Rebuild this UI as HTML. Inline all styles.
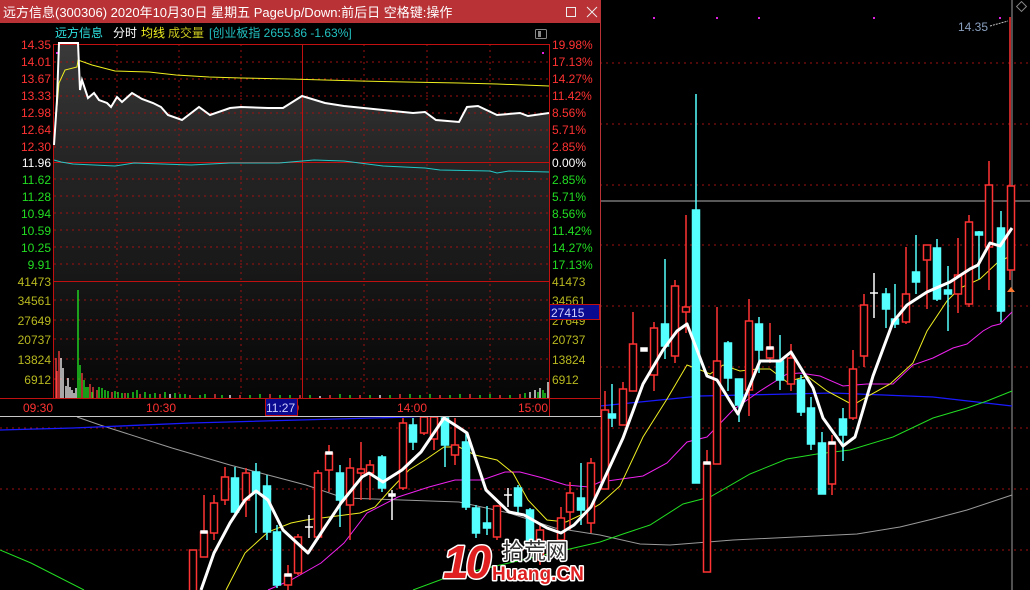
<!DOCTYPE html>
<html><head><meta charset="utf-8"><style>
html,body{margin:0;padding:0;background:#000;width:1030px;height:590px;overflow:hidden}
svg{display:block;font-family:"Liberation Sans","Noto Sans CJK SC",sans-serif}
</style></head><body>
<svg width="1030" height="590" viewBox="0 0 1030 590" xmlns="http://www.w3.org/2000/svg">
<rect width="1030" height="590" fill="#000"/>
<!-- main grid -->
<g stroke="#a01010" stroke-width="1" stroke-dasharray="2,4">
<line x1="0" y1="63" x2="1030" y2="63"/><line x1="0" y1="124" x2="1030" y2="124"/>
<line x1="0" y1="185" x2="1030" y2="185"/><line x1="0" y1="245" x2="1030" y2="245"/>
<line x1="0" y1="306" x2="1030" y2="306"/><line x1="0" y1="367" x2="1030" y2="367"/>
<line x1="0" y1="428" x2="1030" y2="428"/><line x1="0" y1="489" x2="1030" y2="489"/>
<line x1="0" y1="550" x2="1030" y2="550"/>
</g>
<line x1="600" y1="201" x2="1030" y2="201" stroke="#b0b0b0"/>
<line x1="1012" y1="0" x2="1012" y2="590" stroke="#a0a0a0"/>
<g fill="#e020e0"><rect x="653" y="17" width="2" height="2"/><rect x="716" y="17" width="2" height="2"/><rect x="758" y="17" width="2" height="2"/><rect x="873" y="17" width="2" height="2"/><rect x="999" y="17" width="2" height="2"/></g>
<text x="958" y="31" fill="#8aa0c0" font-size="12">14.35</text>
<line x1="990" y1="26" x2="1008" y2="21" stroke="#c0c0c0" stroke-dasharray="2,1"/>
<rect x="1018" y="3" width="7" height="7" fill="none" stroke="#888" transform="rotate(45 1021.5 6.5)"/>
<!-- MA lines -->
<g fill="none" stroke-width="1">
<polyline stroke="#9a9a9a" points="77,417 100,425 172,448 230,465 268,475 306,485 344,498 402,500 459,502 509,513 555,528 600,535 640,544 670,545 733,540 857,534 900,527 933,519 967,510 1012,495"/>
<polyline stroke="#1a1aff" stroke-width="1.3" points="0,430 73,428 191,423 410,417 600,406 700,396 833,393 933,397 1012,406"/>
<polyline stroke="#22dd22" points="0,550 31,563 84,590"/>
<polyline stroke="#22dd22" points="413,590 448,577 509,563 600,542 623,534 650,525 683,504 710,497 750,474 787,459 817,454 850,450 893,437 933,418 967,408 987,401 1012,391"/>
<polyline stroke="#ee22ee" points="268,590 291,580 321,563 344,543 367,513 398,497 429,487 455,480 482,480 505,472 520,472 543,478 566,485 589,487 600,482 643,476 667,463 687,442 707,437 733,410 760,391 787,374 800,373 820,376 843,386 867,384 893,384 913,365 933,358 953,348 967,344 983,331 992,326 1000,324 1012,312"/>
<polyline stroke="#eeee22" points="226,590 245,553 268,532 291,523 306,520 329,517 360,513 375,507 390,490 409,470 425,460 444,447 459,447 475,455 497,460 513,473 528,500 547,520 566,522 585,513 600,504 620,486 643,437 667,399 687,365 703,371 710,374 723,365 740,371 757,369 770,369 787,382 807,376 827,391 853,405 870,395 890,384 913,363 927,331 947,301 960,288 980,279 997,263 1012,255"/>
</g>
<!-- candles -->
<g id="cd" stroke-width="1.5">
<g stroke="#ff3333" fill="#000">
<line x1="193" y1="550" x2="193" y2="590"/><rect x="189.5" y="550" width="7" height="45"/>
<line x1="204" y1="495" x2="204" y2="557"/><rect x="200.5" y="532" width="7" height="25"/>
<line x1="214" y1="495" x2="214" y2="540"/><rect x="210.5" y="503" width="7" height="30"/>
<line x1="225" y1="467" x2="225" y2="505"/><rect x="221.5" y="477" width="7" height="23"/>
<line x1="246" y1="468" x2="246" y2="517"/><rect x="242.5" y="473" width="7" height="27"/>
<line x1="288" y1="565" x2="288" y2="590"/><rect x="284.5" y="575" width="7" height="10"/>
<line x1="298" y1="534" x2="298" y2="575"/><rect x="294.5" y="537" width="7" height="36"/>
<line x1="318" y1="470" x2="318" y2="540"/><rect x="314.5" y="473" width="7" height="64"/>
<line x1="329" y1="445" x2="329" y2="492"/><rect x="325.5" y="453" width="7" height="17"/>
<line x1="350" y1="458" x2="350" y2="540"/><rect x="346.5" y="468" width="7" height="37"/>
<line x1="361" y1="442" x2="361" y2="500"/><rect x="357.5" y="469" width="7" height="4"/>
<line x1="370" y1="460" x2="370" y2="500"/><rect x="366.5" y="465" width="7" height="8"/>
<line x1="403" y1="418" x2="403" y2="490"/><rect x="399.5" y="423" width="7" height="65"/>
<line x1="424" y1="416" x2="424" y2="435"/><rect x="420.5" y="417" width="7" height="16"/>
<line x1="434" y1="416" x2="434" y2="450"/><rect x="430.5" y="417" width="7" height="22"/>
<line x1="455" y1="418" x2="455" y2="465"/><rect x="451.5" y="445" width="7" height="10"/>
<line x1="497" y1="505" x2="497" y2="540"/><rect x="493.5" y="506" width="7" height="31"/>
<line x1="540" y1="525" x2="540" y2="565"/><rect x="536.5" y="530" width="7" height="30"/>
<line x1="561" y1="507" x2="561" y2="545"/><rect x="557.5" y="518" width="7" height="22"/>
<line x1="570" y1="482" x2="570" y2="530"/><rect x="566.5" y="493" width="7" height="19"/>
<line x1="591" y1="458" x2="591" y2="533"/><rect x="587.5" y="463" width="7" height="60"/>
<line x1="605" y1="391" x2="605" y2="489"/><rect x="601.5" y="410" width="7" height="79"/>
<line x1="623" y1="382" x2="623" y2="425"/><rect x="619.5" y="389" width="7" height="36"/>
<line x1="633" y1="312" x2="633" y2="391"/><rect x="629.5" y="344" width="7" height="47"/>
<line x1="654" y1="322" x2="654" y2="391"/><rect x="650.5" y="328" width="7" height="47"/>
<line x1="675" y1="280" x2="675" y2="363"/><rect x="671.5" y="286" width="7" height="70"/>
<line x1="686" y1="215" x2="686" y2="333"/><rect x="682.5" y="307" width="7" height="5"/>
<line x1="707" y1="450" x2="707" y2="572"/><rect x="703.5" y="463" width="7" height="109"/>
<line x1="717" y1="307" x2="717" y2="464"/><rect x="713.5" y="361" width="7" height="103"/>
<line x1="749" y1="299" x2="749" y2="416"/><rect x="745.5" y="321" width="7" height="69"/>
<line x1="770" y1="323" x2="770" y2="363"/><rect x="766.5" y="348" width="7" height="10"/>
<line x1="791" y1="344" x2="791" y2="391"/><rect x="787.5" y="358" width="7" height="26"/>
<line x1="832" y1="435" x2="832" y2="495"/><rect x="828.5" y="443" width="7" height="41"/>
<line x1="853" y1="350" x2="853" y2="420"/><rect x="849.5" y="369" width="7" height="49"/>
<line x1="864" y1="294" x2="864" y2="367"/><rect x="860.5" y="305" width="7" height="51"/>
<line x1="906" y1="247" x2="906" y2="324"/><rect x="902.5" y="294" width="7" height="28"/>
<line x1="927" y1="245" x2="927" y2="309"/><rect x="923.5" y="245" width="7" height="15"/>
<line x1="958" y1="238" x2="958" y2="313"/><rect x="954.5" y="275" width="7" height="19"/>
<line x1="969" y1="215" x2="969" y2="307"/><rect x="965.5" y="222" width="7" height="82"/>
<line x1="989" y1="161" x2="989" y2="290"/><rect x="985.5" y="185" width="7" height="62"/>
<line x1="1010" y1="17" x2="1010" y2="280"/><rect x="1007.5" y="186" width="7" height="84"/>
</g>
<g stroke="#55ffff" fill="#55ffff">
<line x1="235" y1="467" x2="235" y2="515"/><rect x="231.5" y="478" width="7" height="34"/>
<line x1="256" y1="463" x2="256" y2="533"/><rect x="252.5" y="472" width="7" height="20"/>
<line x1="267" y1="475" x2="267" y2="540"/><rect x="263.5" y="486" width="7" height="46"/>
<line x1="277" y1="525" x2="277" y2="588"/><rect x="273.5" y="532" width="7" height="53"/>
<line x1="340" y1="465" x2="340" y2="527"/><rect x="336.5" y="473" width="7" height="27"/>
<line x1="382" y1="455" x2="382" y2="492"/><rect x="378.5" y="457" width="7" height="31"/>
<line x1="413" y1="418" x2="413" y2="450"/><rect x="409.5" y="425" width="7" height="17"/>
<line x1="445" y1="416" x2="445" y2="467"/><rect x="441.5" y="418" width="7" height="27"/>
<line x1="466" y1="433" x2="466" y2="510"/><rect x="462.5" y="442" width="7" height="65"/>
<line x1="476" y1="505" x2="476" y2="538"/><rect x="472.5" y="508" width="7" height="25"/>
<line x1="487" y1="506" x2="487" y2="535"/><rect x="483.5" y="523" width="7" height="5"/>
<line x1="518" y1="485" x2="518" y2="515"/><rect x="514.5" y="488" width="7" height="18"/>
<line x1="530" y1="508" x2="530" y2="560"/><rect x="526.5" y="510" width="7" height="33"/>
<line x1="581" y1="463" x2="581" y2="525"/><rect x="577.5" y="498" width="7" height="12"/>
<line x1="612" y1="384" x2="612" y2="427"/><rect x="608.5" y="414" width="7" height="4"/>
<line x1="665" y1="259" x2="665" y2="359"/><rect x="661.5" y="324" width="7" height="22"/>
<line x1="696" y1="94" x2="696" y2="483"/><rect x="692.5" y="210" width="7" height="273"/>
<line x1="728" y1="341" x2="728" y2="391"/><rect x="724.5" y="343" width="7" height="35"/>
<line x1="739" y1="379" x2="739" y2="422"/><rect x="735.5" y="379" width="7" height="26"/>
<line x1="759" y1="317" x2="759" y2="373"/><rect x="755.5" y="324" width="7" height="26"/>
<line x1="780" y1="335" x2="780" y2="390"/><rect x="776.5" y="361" width="7" height="19"/>
<line x1="801" y1="375" x2="801" y2="416"/><rect x="797.5" y="380" width="7" height="32"/>
<line x1="811" y1="397" x2="811" y2="450"/><rect x="807.5" y="408" width="7" height="36"/>
<line x1="822" y1="432" x2="822" y2="494"/><rect x="818.5" y="443" width="7" height="51"/>
<line x1="843" y1="408" x2="843" y2="461"/><rect x="839.5" y="419" width="7" height="16"/>
<line x1="886" y1="288" x2="886" y2="328"/><rect x="882.5" y="294" width="7" height="15"/>
<line x1="895" y1="284" x2="895" y2="328"/><rect x="891.5" y="319" width="7" height="5"/>
<line x1="916" y1="235" x2="916" y2="294"/><rect x="912.5" y="272" width="7" height="10"/>
<line x1="937" y1="239" x2="937" y2="301"/><rect x="933.5" y="248" width="7" height="51"/>
<line x1="948" y1="266" x2="948" y2="331"/><rect x="944.5" y="290" width="7" height="4"/>
<line x1="979" y1="231" x2="979" y2="279"/><rect x="975.5" y="232" width="7" height="3"/>
<line x1="1001" y1="211" x2="1001" y2="322"/><rect x="997.5" y="228" width="7" height="83"/>
</g>
<g stroke="#fff" fill="#fff">
<line x1="309" y1="515" x2="309" y2="538"/><line x1="305" y1="527" x2="313" y2="527"/>
<line x1="392" y1="490" x2="392" y2="520"/><rect x="389" y="494" width="6" height="2"/>
<line x1="508" y1="488" x2="508" y2="507"/><line x1="504" y1="495" x2="512" y2="495"/>
<line x1="874" y1="273" x2="874" y2="318"/><line x1="870" y1="293" x2="878" y2="293"/>
<rect x="201" y="531" width="6" height="2"/><rect x="285" y="574" width="6" height="2"/><rect x="326" y="452" width="6" height="2"/>
<rect x="641" y="348" width="6" height="3"/><rect x="704" y="462" width="6" height="2"/><rect x="767" y="347" width="6" height="2"/><rect x="829" y="442" width="6" height="2"/>
</g>
</g>
<path d="M1007,292 L1011,287 L1015,292 Z" fill="#ff7a30"/>
<polyline fill="none" stroke="#fff" stroke-width="3" stroke-linejoin="round" points="201,590 214,553 230,523 245,500 256,491 268,500 283,530 308,553 325,527 341,503 362,477 369,473 383,482 402,470 421,452 444,418 455,425 467,433 486,490 509,512 524,515 547,528 561,533 574,525 591,507 600,488 623,438 643,384 663,350 677,331 687,324 707,376 717,380 738,414 760,361 780,361 791,352 813,388 823,418 843,446 855,437 873,376 893,322 907,305 927,292 950,282 970,269 978,265 990,243 1000,246 1012,228"/>
<!-- logo -->
<g font-weight="bold" stroke="#fff" stroke-width="3" paint-order="stroke" stroke-linejoin="round">
<text x="443" y="578" font-size="46" fill="#e02020" font-style="italic" letter-spacing="-3">10</text>
<text x="502" y="559" font-size="22" fill="#333" font-weight="normal">拾荒网</text>
<text x="492" y="580" font-size="19" fill="#e02020">Huang.CN</text>
</g>

<!-- popup -->
<rect x="0" y="0" width="601" height="417" fill="#000"/>
<rect x="0" y="0" width="601" height="23" fill="#b83236"/>
<text x="3" y="17" fill="#fff" font-size="13">远方信息(300306) 2020年10月30日 星期五 PageUp/Down:前后日 空格键:操作</text>
<rect x="566.5" y="7.5" width="9" height="9" fill="none" stroke="#eee"/>
<path d="M587,7 L597,17 M597,7 L587,17" stroke="#eee" stroke-width="1"/>
<line x1="600.5" y1="23" x2="600.5" y2="417" stroke="#b83236"/>
<text x="55" y="37" fill="#2ee0e0" font-size="12">远方信息</text>
<text x="113" y="37" fill="#fff" font-size="12">分时</text>
<text x="141" y="37" fill="#f0f020" font-size="12">均线</text>
<text x="168" y="37" fill="#c8c820" font-size="12">成交量</text>
<text x="209" y="37" fill="#22c0c0" font-size="12">[创业板指 2655.86 -1.63%]</text>
<rect x="535.5" y="29.5" width="11" height="9" rx="1" fill="none" stroke="#888"/><rect x="538" y="31" width="3" height="6" fill="#888"/>
<defs><linearGradient id="g" x1="0" y1="0" x2="0" y2="1"><stop offset="0" stop-color="#3a3a3a"/><stop offset="0.3" stop-color="#262626"/><stop offset="0.6" stop-color="#1a1a1a"/><stop offset="1" stop-color="#060606"/></linearGradient></defs>
<path fill="url(#g)" d="M54,398 L54,145 L57,100 L59,43 L78,43 L80,90 L82,80 L88,98 L94,93 L99,100 L107,103 L111,107 L117,97 L122,102 L132,93 L142,99 L153,103 L161,107 L168,115 L182,120 L199,107 L210,115 L230,108 L241,107 L268,108 L283,108 L302,96 L325,103 L344,106 L383,110 L413,113 L425,112 L436,120 L459,122 L467,107 L478,106 L497,115 L520,113 L528,116 L549,113 L549,398 Z"/>
<g stroke="#a01010" stroke-dasharray="2,4">
<line x1="54" y1="62" x2="549" y2="62"/><line x1="54" y1="79" x2="549" y2="79"/><line x1="54" y1="96" x2="549" y2="96"/><line x1="54" y1="113" x2="549" y2="113"/><line x1="54" y1="130" x2="549" y2="130"/><line x1="54" y1="147" x2="549" y2="147"/>
<line x1="54" y1="179" x2="549" y2="179"/><line x1="54" y1="196" x2="549" y2="196"/><line x1="54" y1="213" x2="549" y2="213"/><line x1="54" y1="230" x2="549" y2="230"/><line x1="54" y1="247" x2="549" y2="247"/><line x1="54" y1="264" x2="549" y2="264"/>
<line x1="54" y1="300" x2="549" y2="300"/><line x1="54" y1="320" x2="549" y2="320"/><line x1="54" y1="339" x2="549" y2="339"/><line x1="54" y1="359" x2="549" y2="359"/><line x1="54" y1="379" x2="549" y2="379"/>
<line x1="117" y1="44" x2="117" y2="398"/><line x1="179" y1="44" x2="179" y2="398"/><line x1="241" y1="44" x2="241" y2="398"/><line x1="364" y1="44" x2="364" y2="398"/><line x1="427" y1="44" x2="427" y2="398"/><line x1="490" y1="44" x2="490" y2="398"/>
</g>
<g stroke="#c01010">
<line x1="53" y1="44.5" x2="549" y2="44.5"/><line x1="53" y1="162.5" x2="549" y2="162.5"/><line x1="53" y1="281.5" x2="549" y2="281.5"/>
<line x1="53.5" y1="44" x2="53.5" y2="398"/><line x1="549.5" y1="44" x2="549.5" y2="416"/><line x1="302.5" y1="44" x2="302.5" y2="398"/>
<line x1="0" y1="398.5" x2="600" y2="398.5"/>
</g>
<rect x="56" y="52" width="2" height="2" fill="#e020e0"/><rect x="542" y="52" width="2" height="2" fill="#e020e0"/>
<polyline fill="none" stroke="#22c8c8" points="54,160 61,162 73,164 115,166 134,163 191,165 230,163 279,163 314,160 344,161 383,166 425,168 440,170 490,171 497,173 509,171 549,172"/>
<polyline fill="none" stroke="#f0f020" points="55,130 59,83 65,70 77,67 78,60 92,65 115,71 149,72 176,75 209,77 241,78 289,79 360,81 406,82 459,83 497,84 549,86"/>
<polyline fill="none" stroke="#fff" stroke-width="2" points="54,145 57,100 59,43 78,43 80,90 82,80 88,98 94,93 99,100 107,103 111,107 117,97 122,102 132,93 142,99 153,103 161,107 168,115 182,120 199,107 210,115 230,108 241,107 268,108 283,108 302,96 325,103 344,106 383,110 413,113 425,112 436,120 459,122 467,107 478,106 497,115 520,113 528,116 549,113"/>
<!-- volume -->
<g stroke-width="1.3">
<path stroke="#ff4040" d="M56,358V398M57,371V398M59,351V398M82,373V398M90,384V398M93,387V398M97,390V398M112,392V398M125,393V398M140,394V398M160,394V398M190,395V398M215,394V398M240,395V398M270,394V398M300,395V398M330,395V398M360,395V398M400,394V398M440,395V398M470,394V398M500,395V398M520,394V398"/>
<path stroke="#fff" d="M61,358V398M63,368V398M66,386V398M68,378V398M70,387V398M72,390V398M74,393V398M76,388V398M170,394V398M230,395V398M320,396V398M380,395V398M530,392V398M535,390V398M540,388V398M548,382V398"/>
<path stroke="#22ee22" d="M78,290V398M80,365V398M84,380V398M86,387V398M88,387V398M92,392V398M99,387V398M102,388V398M105,390V398M108,391V398M115,391V398M118,392V398M122,393V398M128,393V398M133,392V398M137,390V398M145,392V398M150,394V398M155,393V398M165,392V398M175,393V398M180,394V398M185,394V398M200,395V398M205,394V398M222,395V398M250,395V398M260,394V398M280,395V398M290,395V398M310,395V398M340,394V398M350,395V398M370,395V398M390,395V398M410,394V398M420,395V398M430,394V398M450,395V398M460,394V398M480,395V398M490,394V398M510,395V398M525,393V398M538,392V398M543,390V398M545,393V398"/>
</g>
<!-- axis labels -->
<g font-size="12" text-anchor="end">
<g fill="#ff3232"><text x="51" y="49">14.35</text><text x="51" y="66">14.01</text><text x="51" y="83">13.67</text><text x="51" y="100">13.33</text><text x="51" y="117">12.98</text><text x="51" y="134">12.64</text><text x="51" y="151">12.30</text></g>
<text x="51" y="167" fill="#fff">11.96</text>
<g fill="#22dd22"><text x="51" y="184">11.62</text><text x="51" y="201">11.28</text><text x="51" y="218">10.94</text><text x="51" y="235">10.59</text><text x="51" y="252">10.25</text><text x="51" y="269">9.91</text></g>
<g fill="#b8b820"><text x="51" y="286">41473</text><text x="51" y="305">34561</text><text x="51" y="325">27649</text><text x="51" y="344">20737</text><text x="51" y="364">13824</text><text x="51" y="384">6912</text></g>
</g>
<g font-size="12">
<g fill="#ff3232"><text x="552" y="49">19.98%</text><text x="552" y="66">17.13%</text><text x="552" y="83">14.27%</text><text x="552" y="100">11.42%</text><text x="552" y="117">8.56%</text><text x="552" y="134">5.71%</text><text x="552" y="151">2.85%</text></g>
<text x="552" y="167" fill="#fff">0.00%</text>
<g fill="#22dd22"><text x="552" y="184">2.85%</text><text x="552" y="201">5.71%</text><text x="552" y="218">8.56%</text><text x="552" y="235">11.42%</text><text x="552" y="252">14.27%</text><text x="552" y="269">17.13%</text></g>
<g fill="#b8b820"><text x="552" y="286">41473</text><text x="552" y="305">34561</text><text x="552" y="325">27649</text><text x="552" y="344">20737</text><text x="552" y="364">13824</text><text x="552" y="384">6912</text></g>
<rect x="549.5" y="304.5" width="50" height="15" fill="#0a0a90" stroke="#c01010"/>
<text x="551" y="317" fill="#d0d0ff">27415</text>
<g fill="#ff3232"><text x="23" y="412">09:30</text><text x="146" y="412">10:30</text><text x="270" y="412">11:30</text><text x="397" y="412">14:00</text><text x="518" y="412">15:00</text></g>
<rect x="265.5" y="398.5" width="32" height="17" fill="#0a0a90" stroke="#c01010"/>
<text x="266" y="412" fill="#d0d0ff">11:27</text>
</g>
<line x1="0" y1="416.5" x2="601" y2="416.5" stroke="#c8c8c8"/>
</svg>
</body></html>
